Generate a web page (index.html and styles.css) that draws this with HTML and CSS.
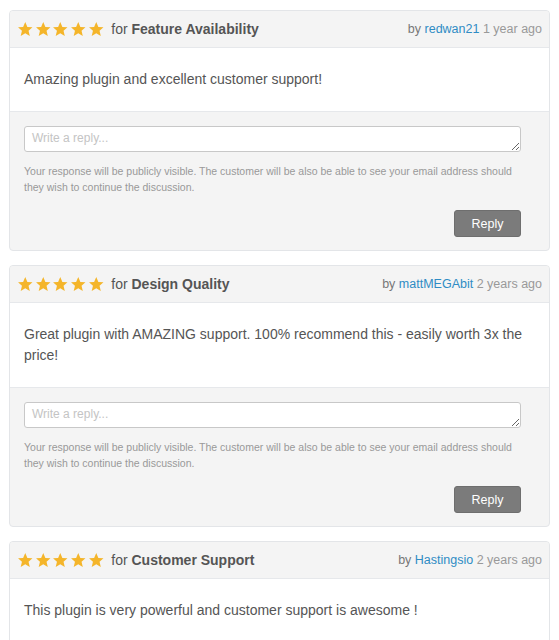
FILE: index.html
```html
<!DOCTYPE html>
<html>
<head>
<meta charset="utf-8">
<link rel="stylesheet" href="styles.css">
</head>
<body>
<div class="list">
  <div class="card">
    <div class="head">
      <div class="left">
        <span class="stars">
          <svg viewBox="0 0 24 24"><path d="M12 1.5l3.1 7.1 7.4.6-5.7 4.9 1.8 7.6L12 17.7l-6.6 4 1.8-7.6-5.7-4.9 7.4-.6z"/></svg>
          <svg viewBox="0 0 24 24"><path d="M12 1.5l3.1 7.1 7.4.6-5.7 4.9 1.8 7.6L12 17.7l-6.6 4 1.8-7.6-5.7-4.9 7.4-.6z"/></svg>
          <svg viewBox="0 0 24 24"><path d="M12 1.5l3.1 7.1 7.4.6-5.7 4.9 1.8 7.6L12 17.7l-6.6 4 1.8-7.6-5.7-4.9 7.4-.6z"/></svg>
          <svg viewBox="0 0 24 24"><path d="M12 1.5l3.1 7.1 7.4.6-5.7 4.9 1.8 7.6L12 17.7l-6.6 4 1.8-7.6-5.7-4.9 7.4-.6z"/></svg>
          <svg viewBox="0 0 24 24"><path d="M12 1.5l3.1 7.1 7.4.6-5.7 4.9 1.8 7.6L12 17.7l-6.6 4 1.8-7.6-5.7-4.9 7.4-.6z"/></svg>
        </span>
        <span class="for">for <b>Feature Availability</b></span>
      </div>
      <div class="meta">by <a class="user">redwan21</a> <span class="time">1 year ago</span></div>
    </div>
    <div class="body">Amazing plugin and excellent customer support!</div>
    <div class="foot">
      <textarea class="reply" placeholder="Write a reply..."></textarea>
      <p class="note">Your response will be publicly visible. The customer will be also be able to see your email address should they wish to continue the discussion.</p>
      <div class="actions"><button class="btn">Reply</button></div>
    </div>
  </div>

  <div class="card">
    <div class="head">
      <div class="left">
        <span class="stars">
          <svg viewBox="0 0 24 24"><path d="M12 1.5l3.1 7.1 7.4.6-5.7 4.9 1.8 7.6L12 17.7l-6.6 4 1.8-7.6-5.7-4.9 7.4-.6z"/></svg>
          <svg viewBox="0 0 24 24"><path d="M12 1.5l3.1 7.1 7.4.6-5.7 4.9 1.8 7.6L12 17.7l-6.6 4 1.8-7.6-5.7-4.9 7.4-.6z"/></svg>
          <svg viewBox="0 0 24 24"><path d="M12 1.5l3.1 7.1 7.4.6-5.7 4.9 1.8 7.6L12 17.7l-6.6 4 1.8-7.6-5.7-4.9 7.4-.6z"/></svg>
          <svg viewBox="0 0 24 24"><path d="M12 1.5l3.1 7.1 7.4.6-5.7 4.9 1.8 7.6L12 17.7l-6.6 4 1.8-7.6-5.7-4.9 7.4-.6z"/></svg>
          <svg viewBox="0 0 24 24"><path d="M12 1.5l3.1 7.1 7.4.6-5.7 4.9 1.8 7.6L12 17.7l-6.6 4 1.8-7.6-5.7-4.9 7.4-.6z"/></svg>
        </span>
        <span class="for">for <b>Design Quality</b></span>
      </div>
      <div class="meta">by <a class="user">mattMEGAbit</a> <span class="time">2 years ago</span></div>
    </div>
    <div class="body">Great plugin with AMAZING support. 100% recommend this - easily worth 3x the price!</div>
    <div class="foot">
      <textarea class="reply" placeholder="Write a reply..."></textarea>
      <p class="note">Your response will be publicly visible. The customer will be also be able to see your email address should they wish to continue the discussion.</p>
      <div class="actions"><button class="btn">Reply</button></div>
    </div>
  </div>

  <div class="card">
    <div class="head">
      <div class="left">
        <span class="stars">
          <svg viewBox="0 0 24 24"><path d="M12 1.5l3.1 7.1 7.4.6-5.7 4.9 1.8 7.6L12 17.7l-6.6 4 1.8-7.6-5.7-4.9 7.4-.6z"/></svg>
          <svg viewBox="0 0 24 24"><path d="M12 1.5l3.1 7.1 7.4.6-5.7 4.9 1.8 7.6L12 17.7l-6.6 4 1.8-7.6-5.7-4.9 7.4-.6z"/></svg>
          <svg viewBox="0 0 24 24"><path d="M12 1.5l3.1 7.1 7.4.6-5.7 4.9 1.8 7.6L12 17.7l-6.6 4 1.8-7.6-5.7-4.9 7.4-.6z"/></svg>
          <svg viewBox="0 0 24 24"><path d="M12 1.5l3.1 7.1 7.4.6-5.7 4.9 1.8 7.6L12 17.7l-6.6 4 1.8-7.6-5.7-4.9 7.4-.6z"/></svg>
          <svg viewBox="0 0 24 24"><path d="M12 1.5l3.1 7.1 7.4.6-5.7 4.9 1.8 7.6L12 17.7l-6.6 4 1.8-7.6-5.7-4.9 7.4-.6z"/></svg>
        </span>
        <span class="for">for <b>Customer Support</b></span>
      </div>
      <div class="meta">by <a class="user">Hastingsio</a> <span class="time">2 years ago</span></div>
    </div>
    <div class="body">This plugin is very powerful and customer support is awesome !</div>
    <div class="foot">
      <textarea class="reply" placeholder="Write a reply..."></textarea>
      <p class="note">Your response will be publicly visible. The customer will be also be able to see your email address should they wish to continue the discussion.</p>
      <div class="actions"><button class="btn">Reply</button></div>
    </div>
  </div>
</div>
</body>
</html>
```

FILE: styles.css
```css
html, body {
  margin: 0;
  padding: 0;
  background: #fff;
  font-family: "Liberation Sans", Arial, sans-serif;
}

.list {
  padding: 10px 9px 0 9px;
  display: flex;
  flex-direction: column;
  gap: 14px;
}

.card {
  border: 1px solid #e3e5e8;
  border-radius: 4px;
  background: #f4f4f4;
  overflow: hidden;
}

.head {
  display: flex;
  justify-content: space-between;
  align-items: center;
  height: 36px;
  padding: 0 7px 0 7px;
  border-bottom: 1px solid #e6e8eb;
  background: #f4f4f4;
}

.left {
  display: flex;
  align-items: center;
}

.stars {
  display: flex;
  gap: 1.2px;
  margin-right: 7px;
}

.stars svg {
  width: 16.5px;
  height: 16.5px;
  fill: #f4b52a;
  display: block;
}

.for {
  font-size: 14px;
  color: #555;
}

.for b {
  color: #555;
  font-weight: bold;
}

.meta {
  font-size: 12.5px;
  color: #777;
}

.user {
  color: #2f8cc4;
  text-decoration: none;
}

.time {
  color: #999;
}

.body {
  background: #fff;
  padding: 21px 20px 21px 14px;
  font-size: 14px;
  line-height: 21px;
  color: #555;
  border-bottom: 1px solid #e6e8eb;
}

.foot {
  padding: 14px 28px 13px 14px;
}

.reply {
  display: block;
  box-sizing: border-box;
  width: 100%;
  height: 26px;
  margin: 0;
  border: 1px solid #c8c8c8;
  border-radius: 3px;
  background: #fff;
  padding: 4px 7px;
  font-family: "Liberation Sans", Arial, sans-serif;
  font-size: 12px;
  color: #555;
  resize: vertical;
}

.reply::placeholder {
  color: #c4c4c4;
}

.note {
  margin: 11px 0 0 0;
  font-size: 10.5px;
  line-height: 16px;
  color: #999;
}

.actions {
  display: flex;
  justify-content: flex-end;
  margin-top: 15px;
}

.btn {
  width: 67px;
  height: 27px;
  border: 1px solid #6e6e6e;
  border-radius: 3px;
  background: #7b7b7b;
  color: #fff;
  font-family: "Liberation Sans", Arial, sans-serif;
  font-size: 12.5px;
  padding: 0;
}
```
